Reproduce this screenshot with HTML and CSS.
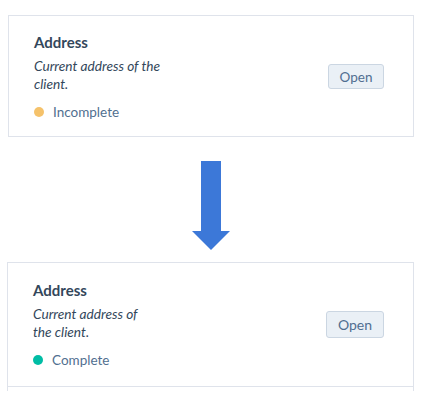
FILE: index.html
```html
<!DOCTYPE html>
<html lang="en">
<head>
    <meta charset="UTF-8">
    <meta name="viewport" content="width=device-width, initial-scale=1.0">
    <title>Address status</title>
    <link rel="stylesheet" href="styles.css">
</head>
<body>
    <div class="page">
        <!-- Before -->
        <div class="card">
            <div class="info">
                <div class="title">Address</div>
                <p class="desc desc-wide">Current address of the client.</p>
                <div class="status"><span class="dot dot-pending"></span>Incomplete</div>
            </div>
            <button class="btn">Open</button>
        </div>

        <div class="arrow">
            <svg width="40" height="89" viewBox="0 0 40 89">
                <polygon points="10,0 30,0 30,70 39,70 20,89 1,70 10,70" fill="#3c78d8"/>
            </svg>
        </div>

        <!-- After -->
        <div class="list">
            <div class="card card-row">
                <div class="info">
                    <div class="title">Address</div>
                    <p class="desc desc-narrow">Current address of the client.</p>
                    <div class="status"><span class="dot dot-done"></span>Complete</div>
                </div>
                <button class="btn">Open</button>
            </div>
            <div class="next-row"></div>
        </div>
    </div>
</body>
</html>
```

FILE: styles.css
```css
body {
    margin: 0;
    background: #fff;
    font-family: Lato, "Noto Sans", sans-serif;
    color: #33475b;
}
.page {
    width: 406px;
    padding: 15px 0 0 8px;
}
.card {
    display: flex;
    align-items: center;
    justify-content: space-between;
    border: 1px solid #dfe3eb;
    padding: 16px 29px 15px 25px;
}
.title {
    font-size: 15px;
    font-weight: bold;
    line-height: 20px;
}
.desc {
    margin: 5px 0 10px;
    font-size: 13.7px;
    font-style: italic;
    line-height: 18px;
}
.desc-wide {
    width: 150px;
}
.desc-narrow {
    width: 126px;
}
.status {
    display: flex;
    align-items: center;
    font-size: 13.5px;
    line-height: 18px;
    color: #516f90;
}
.dot {
    width: 10px;
    height: 10px;
    border-radius: 50%;
    margin-right: 9px;
}
.dot-pending {
    background: #f5c26b;
}
.dot-done {
    background: #00bda5;
}
.btn {
    width: 56px;
    height: 25px;
    padding: 0;
    font-family: inherit;
    font-size: 13.5px;
    color: #506e91;
    background: #eaf0f6;
    border: 1px solid #cbd6e2;
    border-radius: 3px;
}
.arrow {
    display: flex;
    justify-content: center;
    margin: 24px 0 12px;
}
.arrow svg {
    display: block;
}
.list {
    margin-left: -1px;
    width: 407px;
}
.card-row {
    padding-top: 17px;
    padding-bottom: 17px;
}
.card-row .btn {
    width: 58px;
    height: 27px;
    font-size: 14px;
}
.next-row {
    height: 4px;
    border-left: 1px solid #dfe3eb;
    border-right: 1px solid #dfe3eb;
}
```
